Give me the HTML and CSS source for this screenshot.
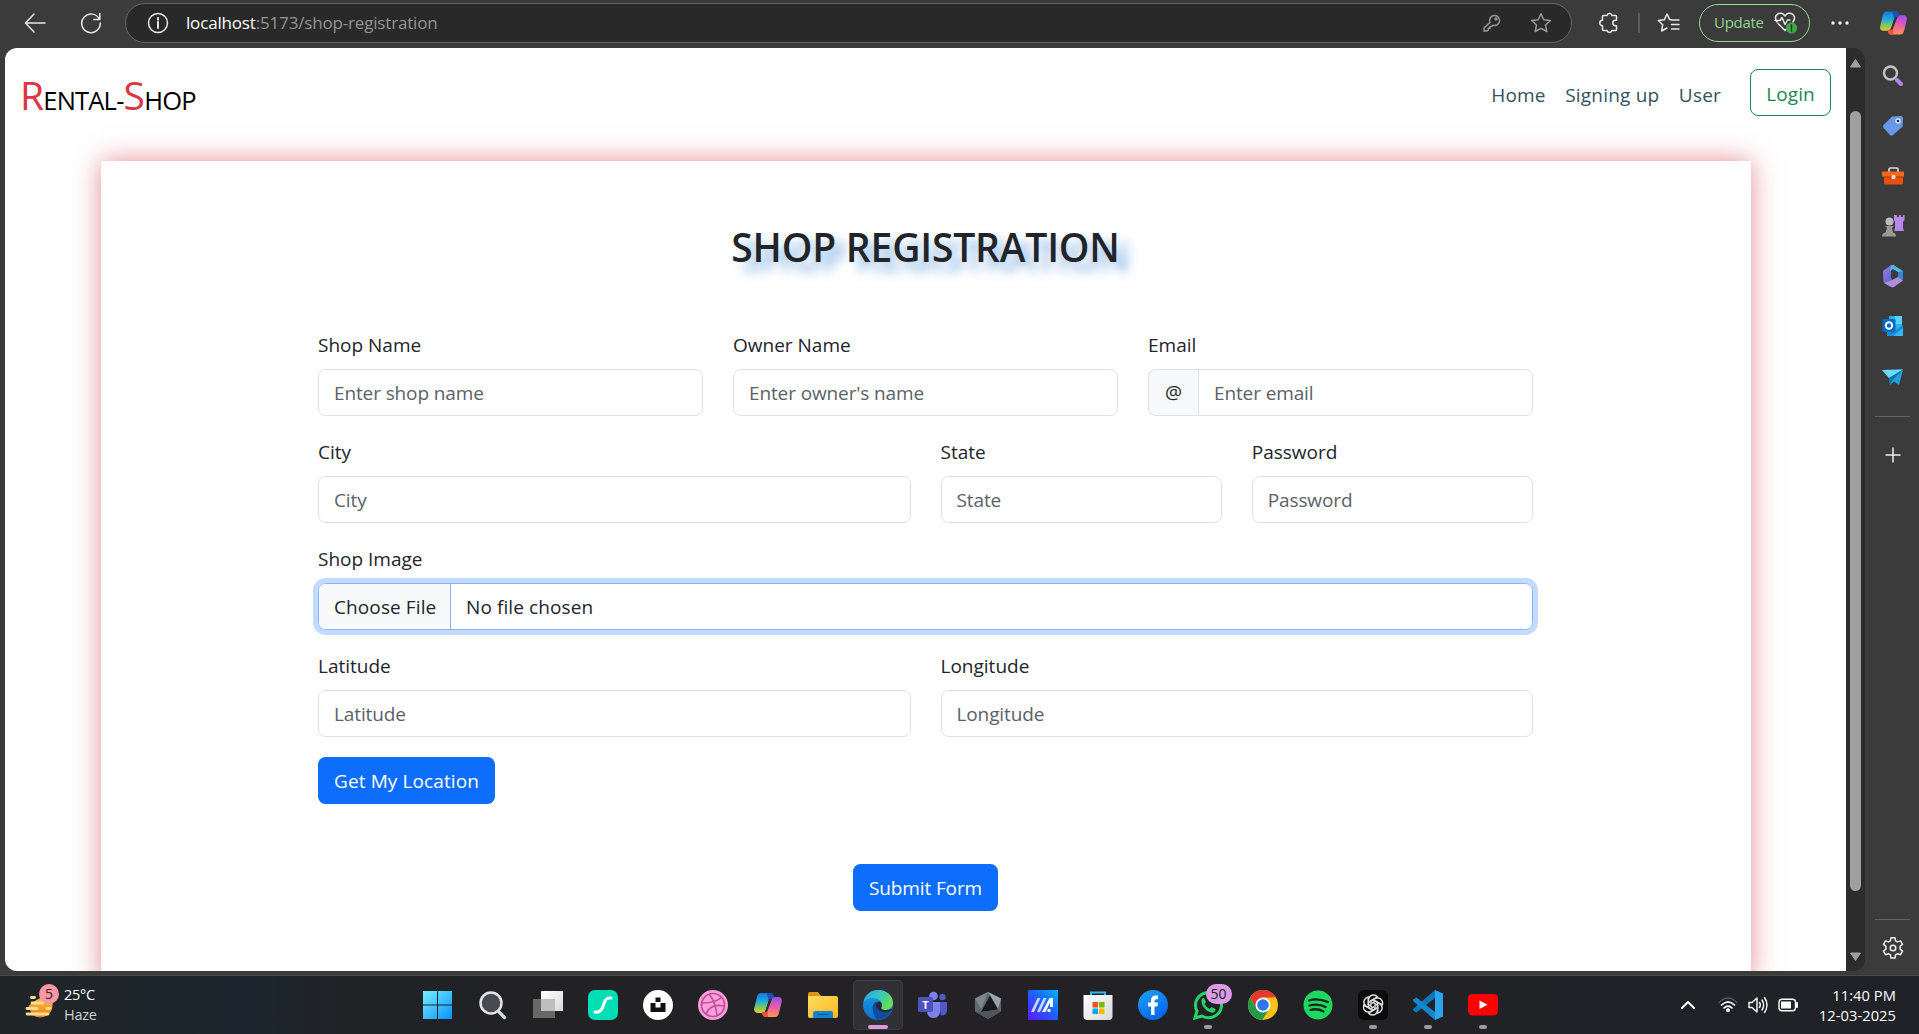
FILE: index.html
```html
<!DOCTYPE html>
<html lang="en">
<head>
<meta charset="utf-8">
<title>Rental-Shop</title>
<link rel="stylesheet" href="styles.css">
</head>
<body>
<svg class="defs" width="0" height="0">
  <defs>
    <linearGradient id="copA" x1="0" y1="0" x2="0" y2="1"><stop offset="0" stop-color="#1476d8"/><stop offset=".4" stop-color="#21a9e0"/><stop offset=".75" stop-color="#85c95a"/><stop offset="1" stop-color="#f0c52e"/></linearGradient>
    <linearGradient id="copB" x1="0.4" y1="0" x2="0.3" y2="1"><stop offset="0" stop-color="#a14df0"/><stop offset=".5" stop-color="#ea5fa5"/><stop offset="1" stop-color="#ff9550"/></linearGradient>
    <linearGradient id="win" x1="0" y1="0" x2="1" y2="1"><stop offset="0" stop-color="#75f0ff"/><stop offset="1" stop-color="#0a90ff"/></linearGradient>
    <linearGradient id="glass" x1="0" y1="0" x2="1" y2="1"><stop offset="0" stop-color="#fff"/><stop offset="1" stop-color="#d9d9d9"/></linearGradient>
    <linearGradient id="fold" x1="0" y1="0" x2="1" y2="1"><stop offset="0" stop-color="#ffdc62"/><stop offset="1" stop-color="#fbb81f"/></linearGradient>
    <linearGradient id="edgeTop" x1="0" y1="0" x2="1" y2=".5"><stop offset="0" stop-color="#2aa5dc"/><stop offset=".5" stop-color="#35c4c9"/><stop offset="1" stop-color="#62e052"/></linearGradient>
    <linearGradient id="edgeL" x1="0" y1="0" x2="0" y2="1"><stop offset="0" stop-color="#1c9ee0"/><stop offset="1" stop-color="#0b70cf"/></linearGradient>
    <linearGradient id="asus" x1="0" y1="1" x2="1" y2="0"><stop offset="0" stop-color="#6216ff"/><stop offset=".55" stop-color="#1c63ff"/><stop offset="1" stop-color="#00b4ff"/></linearGradient>
    <linearGradient id="fb" x1="0" y1="0" x2="0.6" y2="1"><stop offset="0" stop-color="#1da4fb"/><stop offset="1" stop-color="#0865ec"/></linearGradient>
    <linearGradient id="sun" x1="0" y1="0" x2="0" y2="1"><stop offset="0" stop-color="#f8c437"/><stop offset="1" stop-color="#f07d1a"/></linearGradient>
    <linearGradient id="m3a" x1="0" y1="0" x2="1" y2="1"><stop offset="0" stop-color="#a878e0"/><stop offset="1" stop-color="#3d66cf"/></linearGradient>
    <symbol id="copilot" viewBox="0 0 30 30">
      <path d="M8 3h9c2 0 3 1 3.600 3L21 8h-2c-2 0-3 1-3.600 3L13 20c-.5 2-1.500 3-3.500 3H5c-3 0-4.500-2-3.700-5L4 7c.7-2.500 1.700-4 4-4z" fill="url(#copA)"/>
      <path d="M22 27h-9c-2 0-3-1-3.600-3L9 22h2c2 0 3-1 3.600-3L17 10c.5-2 1.500-3 3.500-3H25c3 0 4.500 2 3.700 5L26 23c-.7 2.500-1.700 4-4 4z" fill="url(#copB)"/>
      <path d="M14 3h3c2 0 3 1 3.600 3L21 8h-2c-2 0-3 1-3.500 2.500z" fill="#1650b8"/>
      <path d="M13 27c-2 0-3-1-3.600-3L9 22h2c2 0 3-1 3.500-2.500L15 27z" fill="#f2543c"/>
      <path d="M16.200 10.500Q17 8 19.500 8L14.300 21Q13.500 22.500 11.500 22.500z" fill="#2e3034"/>
    </symbol>
  </defs>
</svg>

<div class="browser">
  <header class="toolbar">
    <div class="tool back"><svg width="22" height="22" viewBox="0 0 22 22"><path d="M21 11H1.500M10 2L1.500 11l8.500 9"/></svg></div>
    <div class="tool reload"><svg width="22" height="22" viewBox="0 0 22 22"><path d="M19.500 7.500A9.300 9.300 0 1 0 20.300 11M19.800 1.500v6h-6"/></svg></div>
    <div class="address">
      <svg width="22" height="22" viewBox="0 0 22 22"><circle cx="11" cy="11" r="9.500"/><path d="M11 10v6M11 6v1.700" stroke-width="2"/></svg>
      <span class="url"><b>localhost</b>:5173/shop-registration</span>
      <svg class="key" width="18" height="18" viewBox="0 0 18 18"><path d="M7 8.500A5 5 0 1 1 10 11.200L8.500 12.500H7v1.700H5.300V16L4 17H1v-3z"/><circle cx="13" cy="5" r=".9"/></svg>
      <svg class="star" width="22" height="22" viewBox="0 0 22 22"><path d="M11 1.700l2.800 6 6.600.8-4.900 4.500 1.300 6.500L11 16.300l-5.800 3.200L6.500 13 1.600 8.500l6.600-.8z"/></svg>
    </div>
    <div class="tool puzzle"><svg width="22" height="22" viewBox="0 0 22 22"><path d="M5.500 3.500H9a2.600 2.600 0 0 1 5 0h3.500q1 0 1 1v3.800h-1a2.700 2.700 0 0 0 0 5.400h1v3.800q0 1-1 1H14a2.600 2.600 0 0 1-5 0H5.500q-1 0-1-1v-3.800a2.700 2.700 0 0 1 0-5.400V4.500q0-1 1-1z"/></svg></div>
    <i class="sep"></i>
    <div class="tool favs"><svg width="24" height="22" viewBox="0 0 24 22"><path d="M15 8l-2.300-.4L10 2 7.300 7.700l-6 .8 4.400 4.300-1.100 6.200L10 16M14.500 8H22M14.500 12.500H22M14.500 17H22"/></svg></div>
    <div class="update"><span>Update</span>
      <svg width="24" height="24" viewBox="0 0 24 24"><path d="M3 11C1 8 1 5 3.500 3.200 6 1.500 9 2 11 5c2-3 5-3.500 7.500-1.800C21 5 21 8 19 11M4 12.500l7 7 2-2M1 9.500h5l2-3 3 7 2.500-4.500H16"/><circle class="dot" cx="17.500" cy="17" r="5.600"/><path class="mark" d="M17.500 14v3.500M17.500 19v1"/></svg>
    </div>
    <div class="tool dots"><svg width="20" height="6" viewBox="0 0 20 6"><g fill="#eee" stroke="none"><circle cx="3" cy="3" r="1.700"/><circle cx="10" cy="3" r="1.700"/><circle cx="17" cy="3" r="1.700"/></g></svg></div>
    <div class="tool cop"><svg width="29" height="30"><use href="#copilot"/></svg></div>
  </header>

  <div class="body">
    <main class="page">
      <nav class="nav">
        <a class="brand"><em>R</em>ENTAL-<em>S</em>HOP</a>
        <a class="link home">Home</a><a class="link sign">Signing up</a><a class="link user">User</a>
        <button class="login">Login</button>
      </nav>
      <section class="card">
        <h1>SHOP REGISTRATION</h1>
        <form class="grid">
          <label class="c4"><span>Shop Name</span><input placeholder="Enter shop name"></label>
          <label class="c4"><span>Owner Name</span><input placeholder="Enter owner's name"></label>
          <label class="c4"><span>Email</span><div class="group"><i>@</i><input placeholder="Enter email"></div></label>
          <label class="c6"><span>City</span><input placeholder="City"></label>
          <label class="c3"><span>State</span><input placeholder="State"></label>
          <label class="c3"><span>Password</span><input placeholder="Password"></label>
          <label class="c12"><span>Shop Image</span><div class="file"><i>Choose File</i><p>No file chosen</p></div></label>
          <label class="c6"><span>Latitude</span><input placeholder="Latitude"></label>
          <label class="c6"><span>Longitude</span><input placeholder="Longitude"></label>
          <div class="c12"><button type="button" class="btn locate">Get My Location</button></div>
        </form>
        <button class="btn submit">Submit Form</button>
      </section>
    </main>
    <div class="scroll">
      <svg width="13" height="10" viewBox="0 0 13 10"><path d="M6.500 1.500L11.500 9h-10z"/></svg>
      <i></i>
      <svg width="13" height="10" viewBox="0 0 13 10"><path d="M6.500 8.500L11.500 1h-10z"/></svg>
    </div>
    <aside class="side">
      <svg width="24" height="24" viewBox="0 0 24 24"><circle cx="9.500" cy="9" r="6.500" fill="none" stroke="#c4c4c4" stroke-width="2.400"/><path d="M16 16l4 4" stroke="#b983ee" stroke-width="4" stroke-linecap="round"/></svg>
      <svg width="24" height="24" viewBox="0 0 24 24"><path d="M11 2.500L20 2q2 0 2 2l-.3 8.500L12 21q-1.500 1.300-3 0L2.500 14q-1-1.500 0-3z" fill="#6698e8"/><circle cx="17" cy="7" r="2" fill="#222" stroke="#dce9ff" stroke-width="1.300"/></svg>
      <svg width="24" height="24" viewBox="0 0 24 24"><path d="M8 8V5.500Q8 4 9.500 4h6Q17 4 17 5.500V8" fill="none" stroke="#ddd" stroke-width="1.700"/><path d="M3 11h19v8q0 1.500-1.500 1.500h-16Q3 20.500 3 19z" fill="#e9500f"/><path d="M1 7.500h22v5H1z" fill="#f6671b"/><path d="M3 12.500h19v1H3z" fill="#b63604"/><circle cx="12.500" cy="13" r="2.200" fill="#ddd"/></svg>
      <svg width="24" height="24" viewBox="0 0 24 24"><path d="M14 1h2v2h2V1h2v2h2V1h1.500v5L22 8v6l1 3H13l1-3V8l-1-2V1z" fill="#b986ec"/><circle cx="8.500" cy="7.500" r="4" fill="#bbb"/><path d="M4 12h9l-2 2 1 4.500q3 .5 3 4H1q0-3.500 3.500-4L6 14z" fill="#999"/></svg>
      <svg width="24" height="24" viewBox="0 0 24 24"><path d="M10 1l3-.3L10 7v7l2 3-6 4-3.500-3L2 7z" fill="url(#m3a)"/><path d="M10 2.500Q12 0 14 2l8 5v8l-4-3-1-4-5-3-3 2z" fill="#4db9ee"/><path d="M22 10v6.500L13 23q-1.500.5-3 0l-7-4 8-3 6-3z" fill="#b28adc"/><path d="M17 8l5-1v10l-5-4z" fill="#3983d5"/></svg>
      <svg width="24" height="24" viewBox="0 0 24 24"><path d="M8 2h13v18H8z" fill="#2bafee"/><path d="M14 2h7v8h-7z" fill="#57d3fa"/><path d="M6 13l8 4 8-6v11H6z" fill="#168bd8"/><path d="M12 22l10-8v8z" fill="#36b5f3"/><rect x="1.500" y="5" width="13" height="13" rx="1.300" fill="#0868bf"/><circle cx="8" cy="11.500" r="3.200" fill="none" stroke="#fff" stroke-width="2"/></svg>
      <svg width="24" height="24" viewBox="0 0 24 24"><path d="M1 5l21-.5L18 20l-5-3.500L9 20l-1-7z" fill="#1f9fdc"/><path d="M22 4.500L8 13 1 5z" fill="#69dafc"/><path d="M22 4.500L8 13l1 7 2.500-5z" fill="#0872ac"/></svg>
      <hr>
      <svg class="line plus" width="24" height="24" viewBox="0 0 24 24"><path d="M12 4.500v15M4.500 12h15"/></svg>
      <hr class="low">
      <svg class="line gear" width="24" height="24" viewBox="0 0 24 24"><circle cx="12" cy="12" r="2.800"/><path d="M10 1.800h4l.6 3 1.900 1.100 3-1 2 3.500-2.400 2v2.800l2.400 2-2 3.500-3-1-1.900 1.100-.6 3.300h-4l-.6-3.300-1.900-1.100-3 1-2-3.500 2.400-2v-2.800l-2.400-2 2-3.500 3 1 1.900-1.100z"/></svg>
    </aside>
  </div>
</div>

<footer class="taskbar">
  <div class="weather">
    <div class="sky"><svg width="30" height="30" viewBox="0 0 30 30"><path d="M3.500 16Q16 4 27 8.500 29.500 21 22 25.500 15 29.500 7 25z" fill="url(#sun)"/><path d="M6.500 7.500h3M7 13h11M2 18.500h10M22 18.500h3M2 24h21" stroke="#f9dd93" stroke-width="2.800" stroke-linecap="round"/></svg><b class="count">5</b></div>
    <div class="temp"><span>25°C</span><small>Haze</small></div>
  </div>
  <div class="apps">
    <div><svg viewBox="0 0 30 30"><path d="M0 1h14v13.500H0zM15 1h14v13.500H15zM0 15.500h14V29H0zM15 15.500h14V29H15z" fill="url(#win)"/></svg></div>
    <div><svg viewBox="0 0 30 30"><circle cx="13" cy="13" r="10.500" fill="#484b4e" stroke="#e2e6ea" stroke-width="2.500"/><path d="M20.500 21.500l6 6" stroke="#d5dadf" stroke-width="3.200" stroke-linecap="round"/></svg></div>
    <div><svg viewBox="0 0 30 30"><path d="M0 9h22v19H0z" fill="#686868"/><path d="M8 1h22v20H8z" fill="url(#glass)"/><path d="M8 9h14v12H8z" fill="#bdbdbd"/></svg></div>
    <div><svg viewBox="0 0 30 30"><rect width="30" height="30" rx="7" fill="#00deb5"/><path d="M7 22c5 1 7-2 8.500-7S18 7.500 23 8" fill="none" stroke="#fff" stroke-width="3" stroke-linecap="round"/></svg></div>
    <div><svg viewBox="0 0 30 30"><circle cx="15" cy="15" r="15" fill="#fff"/><path d="M12.500 7.500h5V12h-5zM7.500 13h5v4.500h5V13h5v9h-15z" fill="#111"/></svg></div>
    <div><svg viewBox="0 0 30 30"><circle cx="15" cy="15" r="15" fill="#ff9edb"/><g fill="none" stroke="#b9529b" stroke-width="1.700"><circle cx="15" cy="15" r="11.500"/><path d="M11 4c5 6 7 13 8 21M4 13c8 0 15-1 20-6M8 24c3-7 9-10 18-8"/></g></svg></div>
    <div><svg viewBox="0 0 30 30"><use href="#copilot"/></svg></div>
    <div><svg viewBox="0 0 30 30"><path d="M0 4q0-2 2-2h8l3 4H0z" fill="#d99a0b"/><path d="M0 6h28q2 0 2 2v18q0 2-2 2H2q-2 0-2-2z" fill="url(#fold)"/><path d="M5 28v-5q0-2 2-2h16q2 0 2 2v5z" fill="#1684d0"/><path d="M9 24.500h12" stroke="#0a5597"/></svg></div>
    <div class="active"><svg viewBox="0 0 30 30"><circle cx="15" cy="15" r="15" fill="url(#edgeL)"/><path d="M.5 12C2 5 8 0 15 0c9 0 15 6 15 12.500 0 5-4 7.500-8 7.500-3 0-4.500-1-3.500-3 1.500-3 0-7-5-8.500S3 8.500.5 12z" fill="url(#edgeTop)"/><path d="M9.500 18c0-3.500 2-6 5-6.500-2.500 4 0 10 6 11 3 .5 5.500-.3 7.500-1-3 5-8 8.500-13 8.500-3.500-2.500-5.500-7.500-5.500-12z" fill="#0c4da3"/><path d="M18.500 17c1-2 .5-4.500-2-5.500-3.500.5-4.500 4-2 7.500 2 2.300 4.500 3.300 7 3.500 4 .2 6-1 7.500-2.500l.2-1.500c-2 1-4.200 1.500-7.200 1.500s-4.500-1-3.500-3z" fill="#26282e"/></svg></div>
    <div><svg viewBox="0 0 30 30"><circle cx="15.500" cy="6" r="4.300" fill="#7b83eb"/><circle cx="24.500" cy="7" r="3.200" fill="#5059c9"/><path d="M20 12h9v9q-1 5-6 4.500z" fill="#5059c9"/><path d="M9 12h13v9q0 7-6.500 7T9 21z" fill="#7b83eb"/><rect y="7" width="15" height="15" rx="1.500" fill="#4b53bc"/><text x="7.500" y="18.500" text-anchor="middle" class="glyph">T</text></svg></div>
    <div><svg viewBox="0 0 30 30"><path d="M15 2l13 6.500v13L15 29 2 21.500v-13z" fill="#62696e"/><path d="M15 2l13 6.500-3 10z" fill="#9aa5ab"/><path d="M15 2L2 8.500 8 19z" fill="#7d878d"/><path d="M17 5.500l8 14-17 2.500z" fill="#17191c"/><path d="M2 21.500L8 22l17-2.500 3 2L15 29z" fill="#505559"/></svg></div>
    <div><svg viewBox="0 0 30 30"><path d="M0 0h30v30H0z" fill="url(#asus)"/><path d="M3 22L9.500 8h3L6 22zM9 22l6.500-14h3L12 22z" fill="#c9d6ff"/><path d="M14 22l7.500-14H25v9h-3v-4.500L17.500 22z" fill="#fff"/><circle cx="21" cy="20.500" r="1.700" fill="#fff"/></svg></div>
    <div><svg viewBox="0 0 30 30"><path d="M8 7V2.500h14V7" fill="none" stroke="#2fb8ef" stroke-width="2"/><path d="M.5 5h29v21q0 4-4 4h-21q-4 0-4-4z" fill="url(#glass)"/><path d="M9.500 12H15v5.500H9.500z" fill="#ef5126"/><path d="M16 12h5.500v5.500H16z" fill="#7fba00"/><path d="M9.500 18.500H15V24H9.500z" fill="#00a4ef"/><path d="M16 18.500h5.500V24H16z" fill="#ffb900"/></svg></div>
    <div><svg viewBox="0 0 30 30"><circle cx="15" cy="15" r="15" fill="url(#fb)"/><path d="M13 25v-8.500h-3v-4h3v-2Q13 5.500 18 5.500h2v3.700h-2q-1.500 0-1.500 1.800v1.500H20l-.6 4h-2.900V25z" fill="#fff"/></svg></div>
    <div class="run"><svg viewBox="0 0 30 30"><path d="M2 28l2-7A13 12.500 0 1 1 9 26z" fill="none" stroke="#25d366" stroke-width="3"/><path d="M9 8.500l2-.5 2 4-1.500 2q2 3.500 5 5l2-2 4 2q0 3.500-3.500 3.700C13 22 6.500 14 9 8.500z" fill="#25d366"/></svg><b class="badge">50</b></div>
    <div><svg viewBox="0 0 30 30"><circle cx="15" cy="15" r="15" fill="#fbc116"/><path d="M2 7.500A15 15 0 0 1 28 7.500H15l-6.500 11z" fill="#e33b2e"/><path d="M2 7.500A15 15 0 0 0 14.500 30l6.500-11-12 .5z" fill="#229a4b"/><circle cx="15" cy="15" r="7.500" fill="#fff"/><circle cx="15" cy="15" r="5.800" fill="#2f75e8"/></svg></div>
    <div><svg viewBox="0 0 30 30"><circle cx="15" cy="15" r="14.500" fill="#1ed75f"/><path d="M6 10.500q9-3 19 1.500M6.500 15.500q9-2.500 16 1.500M7.500 20q7-2 13 1.500" fill="none" stroke="#17251b" stroke-width="2.300" stroke-linecap="round"/></svg></div>
    <div class="run"><svg viewBox="0 0 30 30"><rect width="30" height="30" rx="6" fill="#0b0b0b"/><g fill="none" stroke="#ddd" stroke-width="1.500"><path id="petal" d="M10.500 18V9.500Q11.500 5 15.500 5q2.500 0 4 2L13 10.700V15"/><use href="#petal" transform="rotate(60 15 15)"/><use href="#petal" transform="rotate(120 15 15)"/><use href="#petal" transform="rotate(180 15 15)"/><use href="#petal" transform="rotate(240 15 15)"/><use href="#petal" transform="rotate(300 15 15)"/></g></svg></div>
    <div class="run"><svg viewBox="0 0 30 30"><path d="M22 8L3.500 22.500 0 20.500v-1.500L22 0z" fill="#0a78bd"/><path d="M22 22L3.500 7.500 0 9.500V11l22 19z" fill="#1587cf"/><path d="M22 0l8 3.500v23L22 30z" fill="#2aa5ee"/></svg></div>
    <div class="run"><svg viewBox="0 0 30 30"><rect y="4" width="30" height="21.500" rx="4.500" fill="#f00"/><path d="M11.500 10.500l8 4.300-8 4.300z" fill="#fff"/></svg></div>
  </div>
  <div class="tray">
    <svg width="16" height="10" viewBox="0 0 16 10"><path d="M2 8l6-6 6 6" stroke-width="2"/></svg>
    <svg class="wifi" width="20" height="18" viewBox="0 0 20 18"><path d="M1 6.500Q10-2.500 19 6.500" stroke="#555"/><path d="M3.500 9Q10 2.500 16.500 9M6 12Q10 8 14 12" stroke-width="1.700"/><circle cx="10" cy="14.300" r="2" fill="#fff" stroke="none"/></svg>
    <svg class="vol" width="21" height="18" viewBox="0 0 21 18"><path d="M1 6.500h3L9 2v14l-5-4.500H1zM11.500 6.500q1.600 2.500 0 5M14 4q3.300 5 0 10M16.500 1.500q5 7.500 0 15"/></svg>
    <svg width="21" height="14" viewBox="0 0 21 14"><rect x="1" y="1.300" width="16.500" height="11.400" rx="3"/><path d="M3 3.500h10v7H3z" fill="#fff" stroke="none"/><path d="M19 5v4" stroke-width="2"/></svg>
    <div class="clock"><span>11:40 PM</span><span>12-03-2025</span></div>
  </div>
</footer>
</body>
</html>
```

FILE: styles.css
```css
* { box-sizing: border-box; }
body {
  margin: 0; height: 1034px; overflow: hidden; display: flex; flex-direction: column;
  background: #3b3b3b; color: #212529;
  font: 19px/30px "Open Sans", "Noto Sans", sans-serif; letter-spacing: -.12px;
}
svg { display: block; flex: none; }
.defs { position: absolute; }
button, input { font: inherit; letter-spacing: inherit; }
i, em { font-style: normal; }

.browser { height: 976px; display: flex; flex-direction: column; border-bottom: 1px solid #494949; }

/* browser toolbar */
.toolbar { height: 48px; padding-bottom: 2px; display: flex; align-items: center; }
.toolbar svg { fill: none; stroke: #e8e8e8; stroke-width: 1.5; stroke-linejoin: round; stroke-linecap: round; }
.toolbar .cop svg { stroke: none; }
.tool { width: 40px; display: flex; justify-content: center; }
.back { width: 69px; }
.reload { width: 43px; }
.address {
  width: 1447px; height: 40px; margin: 0 17px 0 13px; padding: 0 19px 0 21px; border: 1.500px solid #666;
  border-radius: 20px; background: #292929; display: flex; align-items: center;
}
.url { margin: 0 auto 0 17px; font-size: 17px; letter-spacing: -.17px; color: #949494; }
.url b { font-weight: 400; color: #fff; }
.address .key { stroke: #999; margin-right: 29px; }
.address .star { stroke: #999; }
.sep { width: 2px; height: 20px; margin: 0 9px; background: #5c5c5c; }
.update {
  width: 111px; height: 38px; margin: 0 10px; padding: 0 11px 0 14px; border: 1.500px solid #9bd69b;
  border-radius: 19px; display: flex; align-items: center; justify-content: space-between;
  color: #91d591; font-size: 15px; letter-spacing: -.3px; line-height: 28px;
}
.update span { padding-bottom: 2px; }
.update .dot { fill: #3fa946; stroke: none; }
.update .mark { stroke: #16351a; }
.cop { margin-left: 13px; height: 36px; padding-top: 3px; }

.body { height: 923px; display: flex; }
.page { width: 1841px; margin-left: 5px; background: #fff; border-radius: 12px 0 0 12px; overflow: hidden; }

/* site navigation */
.nav { height: 113px; padding: 21px 15px 45px 15px; display: flex; align-items: center; color: #34515e; }
.brand { margin-right: auto; padding-top: 10px; color: #000; font-size: 25.5px; line-height: 47px; letter-spacing: -.8px; }
.brand em { font-size: 39px; color: #dc3545; }
.link { margin-right: 19.500px; padding-top: 4px; letter-spacing: .2px; }
.user { margin-right: 29px; }
.login { width: 81px; height: 47px; padding: 2px 0 0; border: 1.500px solid #198754; border-radius: 8px; background: none; color: #198754; letter-spacing: .1px; }

/* registration card */
.card {
  width: 1650px; height: 822px; margin: 0 auto; padding: 62px 217px 0; background: #fff;
  box-shadow: 0 0 25px rgba(205, 45, 62, .55); display: flex; flex-direction: column; align-items: center;
}
h1 {
  margin: 0 0 58px; font-size: 39px; line-height: 48px; font-weight: 600; letter-spacing: -.2px;
  text-shadow: 10px 9px 11px rgba(13, 105, 205, .5); white-space: nowrap;
}
.grid { width: 1215px; display: grid; grid-template-columns: repeat(12, minmax(0, 1fr)); gap: 20px 30px; }
.c3 { grid-column: span 3; }
.c4 { grid-column: span 4; }
.c6 { grid-column: span 6; }
.c12 { grid-column: span 12; }
label { display: flex; flex-direction: column; gap: 9px; letter-spacing: 0; }
label > span { padding-top: 1px; }
input {
  width: 100%; height: 47px; padding: 0 15px; border: 1px solid #dee2e6; border-radius: 7.5px;
  background: #fff; color: #212529; outline: 0; letter-spacing: -.12px;
}
input::placeholder { color: #5b6168; opacity: 1; }
.group, .file { height: 47px; display: flex; }
.group i {
  width: 50px; flex: none; border: 1px solid #dee2e6; border-right: 0; border-radius: 7.5px 0 0 7.5px;
  background: #f8f9fa; text-align: center; line-height: 45px; font-size: 19px;
}
.group input { border-radius: 0 7.5px 7.5px 0; }
.file { border: 1px solid #86b7fe; border-radius: 7.5px; box-shadow: 0 0 0 5px #c2dbff; line-height: 47px; letter-spacing: .1px; }
.file i { width: 132px; height: 45px; padding-left: 15px; background: #f8f9fa; border-right: 1px solid #86b7fe; border-radius: 7px 0 0 7px; }
.file p { margin: 0 0 0 15px; }
.btn { height: 47px; padding: 0; border: 0; border-radius: 7.5px; background: #0d6efd; color: #fff; }
.locate { width: 177px; display: block; letter-spacing: .1px; }
.submit { width: 145px; margin-top: 60px; flex: none; }

/* scrollbar and browser sidebar */
.scroll {
  width: 19px; padding: 10px 0 9px; display: flex; flex-direction: column; align-items: center;
  background: #2c2c2c; border-radius: 0 12px 12px 0;
}
.scroll svg { fill: #9f9f9f; stroke: #9f9f9f; stroke-linejoin: round; }
.scroll i { width: 11px; height: 780px; margin: 43px 0 auto; border-radius: 6px; background: #9f9f9f; }
.side { width: 54px; padding: 15.500px 0 11px 1px; display: flex; flex-direction: column; align-items: center; gap: 26.2px; }
.side hr { width: 35px; height: 1px; margin: 1px 0 0; border: 0; background: #626262; flex: none; }
.side .low { margin-top: auto; }
.side .gear { margin-top: -10px; }
.line { fill: none; stroke: #eee; stroke-width: 1.5; stroke-linejoin: round; }

/* taskbar */
.taskbar {
  height: 58px; display: flex; align-items: center; color: #fff;
  background: linear-gradient(90deg, #202527 0, #1c252b 150px, #1b2630 240px, #212225 350px, #232125 900px, #202227 1919px);
}
.weather { width: 412.500px; padding-left: 25px; display: flex; align-items: center; }
.sky { position: relative; width: 32px; padding-top: 0; margin-right: 7px; }
.count {
  position: absolute; left: 14px; top: -6px; width: 20px; height: 20px; border-radius: 10px;
  background: #ff96a4; color: #222; font: 14px/20px "Open Sans", sans-serif; text-align: center;
}
.temp { display: flex; flex-direction: column; font-size: 14.5px; line-height: 20px; letter-spacing: -.3px; }
.temp small { font-size: 14.5px; color: #d2d2d2; }
.apps { display: flex; gap: 5px; }
.apps > div { position: relative; width: 50px; height: 50px; padding: 10px; border-radius: 5px; }
.apps svg { width: 30px; height: 30px; }
.apps .active { background: #303035; box-shadow: inset 0 0 0 1px #3c3c41; }
.active::after, .run::after {
  content: ""; position: absolute; left: 21px; bottom: 1px; width: 8px; height: 4px; border-radius: 2px; background: #9b9b9d;
}
.active::after { left: 15px; width: 20px; background: #d99be0; }
.badge {
  position: absolute; left: 23px; top: 4px; width: 26px; height: 20px; border-radius: 10px;
  background: #d99be5; color: #1e1e1e; font: 14px/20px "Open Sans", sans-serif; text-align: center;
}
.glyph { font: 700 11px "Open Sans", sans-serif; fill: #fff; }
.tray { margin-left: auto; padding-right: 23px; display: flex; align-items: center; }
.tray svg { fill: none; stroke: #fff; stroke-width: 1.4; stroke-linejoin: round; stroke-linecap: round; }
.wifi { margin: 0 10px 0 22px; }
.vol { margin-right: 9px; }
.clock { width: 97px; display: flex; flex-direction: column; text-align: right; font-size: 14.7px; line-height: 20px; letter-spacing: .05px; white-space: nowrap; }
```
